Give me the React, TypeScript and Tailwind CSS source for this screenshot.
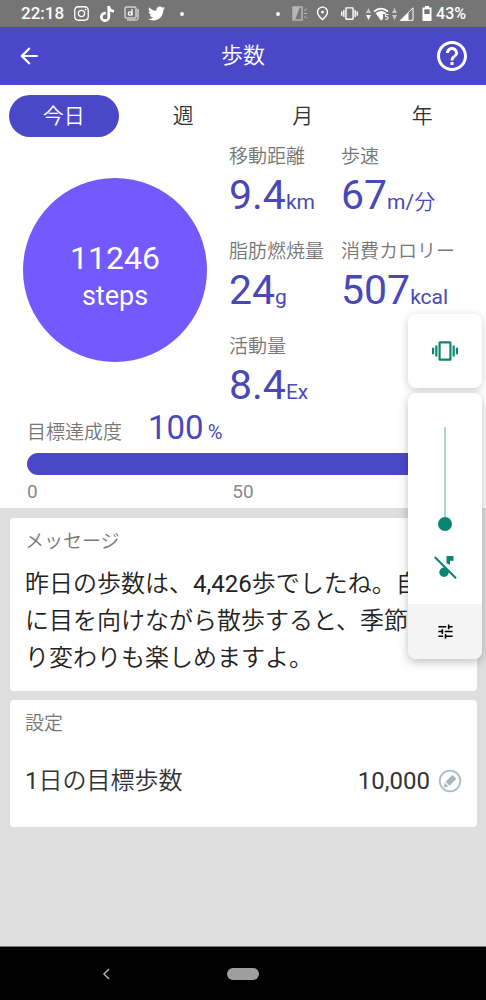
/**
 * Steps screen of a pedometer app, with the system volume
 * panel shown over its right edge.
 */

import { useState } from 'react';
import { FaInstagram, FaTiktok, FaTwitter } from 'react-icons/fa6';
import {
  MdArrowBack,
  MdHelpOutline,
  MdOutlinePlace,
  MdTune,
  MdVibration,
} from 'react-icons/md';

const TABS = ['今日', '週', '月', '年'];

const METRICS = [
  { label: '移動距離', value: '9.4', unit: 'km' },
  { label: '歩速', value: '67', unit: 'm/分' },
  { label: '脂肪燃焼量', value: '24', unit: 'g' },
  { label: '消費カロリー', value: '507', unit: 'kcal' },
  { label: '活動量', value: '8.4', unit: 'Ex' },
];

function DataArrows({ down = false }: { down?: boolean }) {
  return (
    <svg width="5" height="14" viewBox="0 0 5 14" fill="currentColor">
      <path d="M2.5 1 5 6H0z" opacity="0.6" />
      <path d="M2.5 13 0 8h5z" opacity={down ? 1 : 0.6} />
    </svg>
  );
}

function StatusBar() {
  return (
    <div className="flex h-[27px] items-center justify-between bg-[#757575] pr-5 pl-[21px] text-white">
      <div className="flex items-center">
        <span className="w-12 text-[17px] leading-none font-medium">22:18</span>
        <div className="grid grid-cols-[repeat(5,25px)] place-items-center">
          <FaInstagram size={17} />
          <FaTiktok size={16} />
          <svg width="15" height="15" viewBox="0 0 15 15" fill="none" stroke="currentColor">
            <rect x="1" y="1" width="11" height="11" rx="1" />
            <path d="M3 14h9.500q1.500 0 1.500-1.500V3" />
            <circle cx="6" cy="7.500" r="1.700" strokeWidth="1.300" />
            <path d="M8 3v6.500" strokeWidth="1.300" />
          </svg>
          <FaTwitter size={17} />
          <span className="size-1 rounded-full bg-white" />
        </div>
      </div>

      <div className="flex items-center">
        <span className="mr-3 size-1 rounded-full bg-white" />
        <svg className="mr-1.5 text-[#b5b5b5]" width="16" height="15" viewBox="0 0 16 15" fill="none" stroke="currentColor">
          <rect x="1" y="1" width="9" height="13" strokeWidth="1.500" />
          <path d="M1 1h7L3 14H1z" fill="currentColor" stroke="none" />
          <path d="M12 4.500 15 3M12 7.500h3M12 10.500l3 1.500" />
        </svg>
        <MdOutlinePlace className="mr-2.5" size={17} />
        <MdVibration className="mr-2" size={17} />
        <DataArrows down />
        <svg className="mx-0.5" width="17" height="14" viewBox="0 0 17 14" fill="none">
          <path d="M1 4.500Q8 -1.200 15 4.500" stroke="currentColor" strokeWidth="1.800" />
          <path d="M2.600 6.200Q8 2 13.400 6.200L12 7H10v5l-2 1.500z" fill="currentColor" />
          <path d="M15.500 7.500h-3v2.200q2.800-.6 2.800 1.300 0 1.800-3 1.300" stroke="currentColor" />
        </svg>
        <DataArrows />
        <svg className="ml-0.5" width="15" height="14" viewBox="0 0 15 14" fill="none">
          <path d="M1.500 13.300H14V.8z" stroke="currentColor" />
          <path d="M1 13.500h8.500v-8z" fill="currentColor" />
        </svg>
        <svg className="mr-1 ml-2" width="10" height="15" viewBox="0 0 10 15" fill="none">
          <path d="M3 0h4v1.500h2.500v13.500H.5V1.500H3z" fill="currentColor" />
          <path d="M2.300 3.300h5.400v4.700H2.300z" fill="#757575" />
        </svg>
        <span className="text-base leading-none font-medium">43%</span>
      </div>
    </div>
  );
}

function Header() {
  return (
    <header className="grid h-[58px] grid-cols-[1fr_auto_1fr] items-center bg-[#4a48c8] px-4 text-white">
      <button type="button" aria-label="戻る" className="justify-self-start">
        <MdArrowBack size={26} />
      </button>
      <h1 className="text-[22px] leading-8">歩数</h1>
      <button type="button" aria-label="ヘルプ" className="justify-self-end">
        <MdHelpOutline size={36} />
      </button>
    </header>
  );
}

function Tabs() {
  const [active, setActive] = useState(0);
  return (
    <nav className="grid grid-cols-4 px-1 pt-2.5">
      {TABS.map((tab, i) => (
        <button
          key={tab}
          type="button"
          onClick={() => setActive(i)}
          className={`mx-[5px] h-[42px] rounded-full text-[21px] leading-none ${
            i === active ? 'bg-[#4a48c8] text-white' : 'text-[#333]'
          }`}
        >
          {tab}
        </button>
      ))}
    </nav>
  );
}

function Summary() {
  return (
    <section className="flex items-start px-[23px] pt-1.5">
      <div className="mt-[35px] flex size-[184px] shrink-0 flex-col items-center justify-center rounded-full bg-[#7459ff] pt-3 text-white">
        <span className="text-[32px] leading-10">11246</span>
        <span className="text-[27px] leading-9">steps</span>
      </div>
      <dl className="ml-[22px] grid grow grid-cols-[112px_1fr]">
        {METRICS.map((m) => (
          <div key={m.label} className="h-[95px] whitespace-nowrap">
            <dt className="text-[19px] leading-7 text-[#777]">{m.label}</dt>
            <dd className="text-[41px] leading-[48px] text-[#4a48b8]">
              {m.value}
              <span className="text-[21px] leading-none">{m.unit}</span>
            </dd>
          </div>
        ))}
      </dl>
    </section>
  );
}

function Goal() {
  return (
    <section className="px-[27px] pb-0.5">
      <div className="-mt-5 flex h-10 items-baseline">
        <span className="text-[19px] text-[#777]">目標達成度</span>
        <span className="ml-[26px] text-[33px] leading-10 text-[#4a48b8]">100</span>
        <span className="ml-1 text-xl text-[#4a48b8]">%</span>
      </div>
      <div className="mt-[5px] h-[22px] rounded-full bg-[#4a48c8]" />
      <div className="mt-[3px] grid grid-cols-3 text-[19px] leading-7 text-[#8a8a8a]">
        <span>0</span>
        <span className="text-center">50</span>
        <span className="text-right">100</span>
      </div>
    </section>
  );
}

function NoteOffIcon() {
  return (
    <svg width="23" height="23" viewBox="0 0 23 23">
      <path d="M12.500 0h7v4.700h-3.500v4l-3.500-1.500z" fill="currentColor" />
      <circle cx="10" cy="16.300" r="4.700" fill="currentColor" />
      <path d="M2.200 .5 12.500 10.800" stroke="#fff" strokeWidth="1.500" />
      <path d="M.7 1 22 22.300" stroke="currentColor" strokeWidth="2" />
    </svg>
  );
}

function VolumePanel() {
  const [volume, setVolume] = useState(0);
  return (
    <aside className="absolute top-[314px] right-1 flex w-[74px] flex-col gap-[5px] text-[#0a8574]">
      <button
        type="button"
        aria-label="バイブレーション"
        className="flex h-[74px] items-center justify-center rounded-lg bg-white shadow-[0_2px_8px_rgba(0,0,0,0.2)]"
      >
        <MdVibration size={26} />
      </button>
      <div className="flex flex-col items-center overflow-hidden rounded-lg bg-white pt-[34px] shadow-[0_3px_10px_rgba(0,0,0,0.25)]">
        <input
          type="range"
          aria-label="音量"
          min={0}
          max={100}
          value={volume}
          onChange={(e) => setVolume(Number(e.target.value))}
          className="h-[104px] w-3.5 appearance-none bg-[linear-gradient(#a9d8ce,#a9d8ce)] bg-[length:2px_100%] bg-center bg-no-repeat [direction:rtl] [writing-mode:vertical-lr] [&::-webkit-slider-thumb]:size-3.5 [&::-webkit-slider-thumb]:appearance-none [&::-webkit-slider-thumb]:rounded-full [&::-webkit-slider-thumb]:bg-[#0a8574]"
        />
        <button type="button" aria-label="ミュート解除" className="flex h-[73px] items-center">
          <NoteOffIcon />
        </button>
        <button
          type="button"
          aria-label="音の設定"
          className="flex h-[55px] w-full items-center justify-center bg-[#f4f4f4] text-black"
        >
          <MdTune size={19} />
        </button>
      </div>
    </aside>
  );
}

function EditIcon() {
  return (
    <svg width="24" height="24" viewBox="0 0 24 24" fill="none">
      <circle cx="12" cy="12" r="10.300" stroke="#b0bcc4" strokeWidth="1.800" />
      <path d="M7.600 12.800 13.800 6.600Q14.600 5.800 15.400 6.600L17.700 8.900Q18.500 9.700 17.700 10.500L11.500 16.700z" fill="#a9b5bd" />
      <path d="M6.800 13.800 10.400 17.400 5.600 18.500z" fill="#a9b5bd" />
    </svg>
  );
}

export default function App() {
  return (
    <div className="relative flex min-h-screen flex-col bg-[#dedede] font-['Roboto','Noto_Sans_CJK_JP_DemiLight','Noto_Sans_CJK_JP',sans-serif]">
      <StatusBar />
      <Header />

      <div className="bg-white">
        <Tabs />
        <Summary />
        <Goal />
      </div>

      <main className="flex grow flex-col gap-[9px] py-2.5 pr-[9px] pl-2.5">
        <section className="rounded-sm bg-white px-[15px] pt-2.5 pb-3.5">
          <h2 className="text-[19px] leading-7 text-[#777]">メッセージ</h2>
          <p className="mt-2.5 text-2xl leading-[37px] text-[#222]">
            昨日の歩数は、4,426歩でしたね。自然に目を向けながら散歩すると、季節の移り変わりも楽しめますよ。
          </p>
        </section>

        <section className="rounded-sm bg-white px-[15px] pt-2.5 pb-[26px]">
          <h2 className="text-[19px] leading-7 text-[#777]">設定</h2>
          <div className="mt-[23px] flex items-center justify-between text-2xl leading-10 text-[#333]">
            <span>1日の目標歩数</span>
            <span className="flex items-center gap-2">
              10,000
              <button type="button" aria-label="目標歩数を編集">
                <EditIcon />
              </button>
            </span>
          </div>
        </section>
      </main>

      <footer className="grid h-[54px] grid-cols-[1fr_auto_1fr] items-center border-t border-[#777] bg-black">
        <button type="button" aria-label="戻る" className="ml-[102px] justify-self-start">
          <svg width="8" height="12" viewBox="0 0 8 12" fill="none" stroke="#b0b0b0" strokeWidth="1.500">
            <path d="M7 1 2 6l5 5" />
          </svg>
        </button>
        <button type="button" aria-label="ホーム" className="h-3 w-8 rounded-full bg-[#9e9e9e]" />
      </footer>

      <VolumePanel />
    </div>
  );
}
